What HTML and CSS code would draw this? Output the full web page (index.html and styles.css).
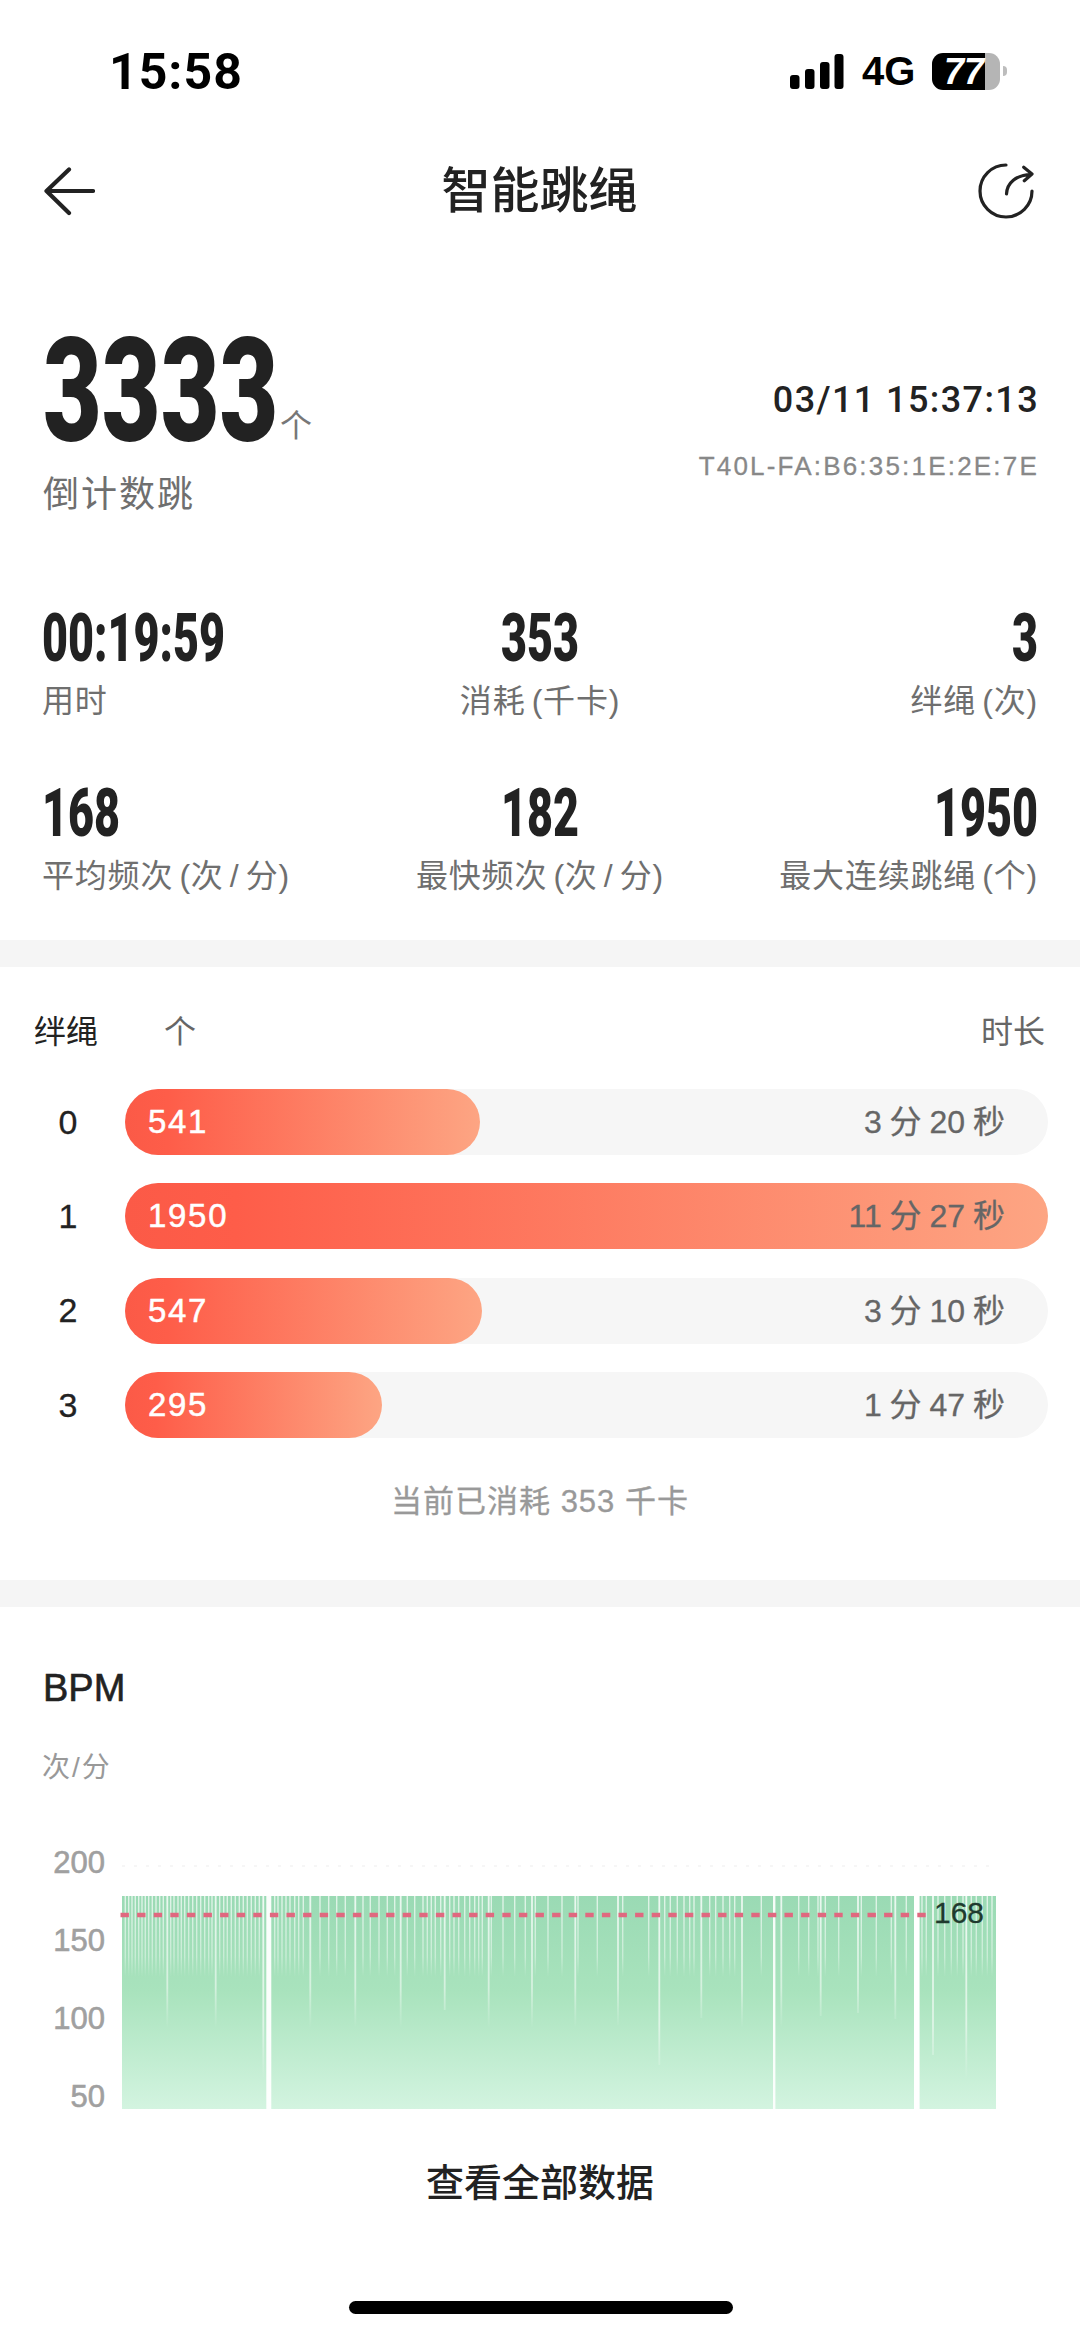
FILE: index.html
```html
<!DOCTYPE html>
<html>

<head>
    <meta charset="UTF-8">
    <title>智能跳绳</title>
    <link rel="stylesheet" href="styles.css">
</head>

<body>
    <div class="page">
        <!-- Status bar -->
        <div class="status-bar">
            <span class="status-time">15:58</span>
            <div class="status-right">
                <svg class="signal" width="54" height="36" viewBox="0 0 54 36">
                    <rect x="0" y="21" width="9.5" height="14" rx="3"></rect>
                    <rect x="15" y="15" width="9.5" height="20" rx="3"></rect>
                    <rect x="30" y="8" width="9.5" height="27" rx="3"></rect>
                    <rect x="44.5" y="0" width="9" height="35" rx="3"></rect>
                </svg>
                <span class="status-net">4G</span>
                <div class="battery">
                    <div class="battery-body">77</div>
                    <div class="battery-nub"></div>
                </div>
            </div>
        </div>

        <!-- Nav -->
        <div class="nav">
            <svg class="icon" width="52" height="52" viewBox="0 0 52 52">
                <path d="M50 26H4M26 4.500L3.500 26L26 48" fill="none" stroke="#222" stroke-width="4.200" stroke-linecap="round" stroke-linejoin="round"></path>
            </svg>
            <h1>智能跳绳</h1>
            <svg class="icon icon-right" width="60" height="60" viewBox="0 0 60 60">
                <path d="M30 4A26 26 0 1 0 56 30" fill="none" stroke="#222" stroke-width="3.200" stroke-linecap="round"></path>
                <path d="M30.500 33C31 22 40 14 55 13.500M47.700 6.300L56 13L48.300 19.700" fill="none" stroke="#222" stroke-width="3.200" stroke-linecap="round" stroke-linejoin="round"></path>
            </svg>
        </div>

        <!-- Summary -->
        <div class="summary">
            <div class="summary-left">
                <div class="count-row">
                    <span class="count-box"><span class="count">3333</span></span>
                    <span class="count-unit">个</span>
                </div>
                <div class="count-label">倒计数跳</div>
            </div>
            <div class="summary-right">
                <div class="date">03/11 15:37:13</div>
                <div class="mac">T40L-FA:B6:35:1E:2E:7E</div>
            </div>
        </div>

        <!-- Stats -->
        <div class="stats">
            <div class="stat stat-left">
                <div class="stat-value">00:19:59</div>
                <div class="stat-label">用时</div>
            </div>
            <div class="stat stat-center">
                <div class="stat-value">353</div>
                <div class="stat-label">消耗 (千卡)</div>
            </div>
            <div class="stat stat-right">
                <div class="stat-value">3</div>
                <div class="stat-label">绊绳 (次)</div>
            </div>
            <div class="stat stat-left">
                <div class="stat-value">168</div>
                <div class="stat-label">平均频次 (次 / 分)</div>
            </div>
            <div class="stat stat-center">
                <div class="stat-value">182</div>
                <div class="stat-label">最快频次 (次 / 分)</div>
            </div>
            <div class="stat stat-right">
                <div class="stat-value">1950</div>
                <div class="stat-label">最大连续跳绳 (个)</div>
            </div>
        </div>

        <div class="divider"></div>

        <!-- Bars -->
        <div class="trips">
            <div class="trips-head">
                <span class="trips-title">绊绳</span>
                <span class="trips-unit">个</span>
                <span class="trips-time">时长</span>
            </div>
            <div class="bar-list">
                <div class="bar-row">
                    <span class="bar-index">0</span>
                    <div class="track">
                        <div class="fill" style="width: 38.5%">541</div>
                        <div class="duration">3 分 20 秒</div>
                    </div>
                </div>
                <div class="bar-row">
                    <span class="bar-index">1</span>
                    <div class="track">
                        <div class="fill" style="width: 100%">1950</div>
                        <div class="duration">11 分 27 秒</div>
                    </div>
                </div>
                <div class="bar-row">
                    <span class="bar-index">2</span>
                    <div class="track">
                        <div class="fill" style="width: 38.7%">547</div>
                        <div class="duration">3 分 10 秒</div>
                    </div>
                </div>
                <div class="bar-row">
                    <span class="bar-index">3</span>
                    <div class="track">
                        <div class="fill" style="width: 27.8%">295</div>
                        <div class="duration">1 分 47 秒</div>
                    </div>
                </div>
            </div>
            <div class="trips-note">当前已消耗 353 千卡</div>
        </div>

        <div class="divider"></div>

        <!-- BPM chart -->
        <div class="bpm">
            <div class="bpm-title">BPM</div>
            <div class="bpm-unit">次/分</div>
            <div class="chart">
                <div class="axis">
                    <span>200</span>
                    <span>150</span>
                    <span>100</span>
                    <span>50</span>
                </div>
                <svg class="plot" width="880" height="250" viewBox="118 1864 880 250">
                    <defs>
                        <linearGradient id="area" x1="0" y1="1896" x2="0" y2="2109" gradientUnits="userSpaceOnUse">
                            <stop offset="0" stop-color="#9adab4"></stop>
                            <stop offset="0.45" stop-color="#a9e3bd"></stop>
                            <stop offset="1" stop-color="#d3f4e0"></stop>
                        </linearGradient>
                        <linearGradient id="fade-short" x1="0" y1="1896" x2="0" y2="1977" gradientUnits="userSpaceOnUse">
                            <stop offset="0" stop-color="#fff" stop-opacity="0.7"></stop>
                            <stop offset="0.75" stop-color="#fff" stop-opacity="0.4"></stop>
                            <stop offset="1" stop-color="#fff" stop-opacity="0"></stop>
                        </linearGradient>
                        <linearGradient id="fade-long" x1="0" y1="1896" x2="0" y2="2028" gradientUnits="userSpaceOnUse">
                            <stop offset="0" stop-color="#fff" stop-opacity="0.8"></stop>
                            <stop offset="0.7" stop-color="#fff" stop-opacity="0.5"></stop>
                            <stop offset="1" stop-color="#fff" stop-opacity="0"></stop>
                        </linearGradient>
                        <linearGradient id="fade-longer" x1="0" y1="1896" x2="0" y2="2080" gradientUnits="userSpaceOnUse">
                            <stop offset="0" stop-color="#fff" stop-opacity="0.85"></stop>
                            <stop offset="0.7" stop-color="#fff" stop-opacity="0.55"></stop>
                            <stop offset="1" stop-color="#fff" stop-opacity="0"></stop>
                        </linearGradient>
                    </defs>
                    <path d="M122 1866H996" stroke="#f3f3f3" stroke-width="1.500" stroke-dasharray="3 9"></path>
                    <rect x="122" y="1896" width="874" height="213" fill="url(#area)"></rect>
                    <path fill="none" stroke="url(#fade-short)" stroke-width="1.400" d="M125.300 1896V1977M128.700 1896V1977M132 1896V1977M135.300 1896V1977M138.700 1896V1977M142 1896V1977M145.300 1896V1977M148.700 1896V1977M152.300 1896V1977M156 1896V1977M159.700 1896V1977M163.300 1896V1977M170.700 1896V1977M174 1896V1977M178 1896V1977M181.300 1896V1977M184.700 1896V1977M188.700 1896V1977M192.700 1896V1977M196.700 1896V1977M200.700 1896V1977M204.700 1896V1977M208.700 1896V1977M212 1896V1977M219.700 1896V1977M223.700 1896V1977M227.300 1896V1977M231.300 1896V1977M235.300 1896V1977M239.300 1896V1977M243.300 1896V1977M247.300 1896V1977M251.300 1896V1977M255.300 1896V1977M259.300 1896V1977M274.700 1896V1977M278 1896V1977M282 1896V1977M286 1896V1977M290 1896V1977M294.700 1896V1977M298.700 1896V1977M303.300 1896V1977M320 1896V1977M328.700 1896V1977M336.700 1896V1977M345.300 1896V1977M363 1896V1977M370.300 1896V1977M379 1896V1977M387.300 1896V1977M394.700 1896V1977M407.300 1896V1977M414.700 1896V1977M423 1896V1977M427.300 1896V1977M431.300 1896V1977M435.300 1896V1977M440.700 1896V1977M449.700 1896V1977M454 1896V1977M458.700 1896V1977M464.700 1896V1977M469.700 1896V1977M474.700 1896V1977M478.700 1896V1977M482.300 1896V1977M491.300 1896V1977M503 1896V1977M514.700 1896V1977M525.300 1896V1977M535.300 1896V1977M548 1896V1977M562 1896V1977M578 1896V1977M597.300 1896V1977M622.700 1896V1977M648.700 1896V1977M664.700 1896V1977M670.300 1896V1977M677.300 1896V1977M684 1896V1977M689.700 1896V1977M694 1896V1977M709.700 1896V1977M715.700 1896V1977M723 1896V1977M729.700 1896V1977M734.700 1896V1977M761.300 1896V1977M798.700 1896V1977M808.700 1896V1977M818 1896V1977M825.300 1896V1977M838.700 1896V1977M861.300 1896V1977M876.300 1896V1977M891.300 1896V1977M906.300 1896V1977M922 1896V1977M926.300 1896V1977M938 1896V1977M944.700 1896V1977M951.300 1896V1977M957.300 1896V1977M963 1896V1977M971.300 1896V1977M976.300 1896V1977M982.300 1896V1977M987.300 1896V1977M992 1896V1977"></path>
                    <path fill="none" stroke="url(#fade-long)" stroke-width="1.800" d="M167.300 1896V2028M215.700 1896V2028M310.300 1896V2028M355.300 1896V2028M400.700 1896V2028M444.700 1896V2010M488.700 1896V2028M532 1896V2028M575.300 1896V2028M618 1896V2025M701.300 1896V2018M742 1896V2028M781.300 1896V2028M820.700 1896V2016M858 1896V2013M895.300 1896V2019"></path>
                    <path fill="none" stroke="url(#fade-longer)" stroke-width="1.800" d="M263.300 1896V2080M659.300 1896V2065M933 1896V2055M966.300 1896V2080"></path>
                    <path fill="none" stroke="#fff" stroke-opacity="0.95" d="M268.800 1896V2109" stroke-width="5"></path>
                    <path fill="none" stroke="#fff" stroke-opacity="0.9" d="M774.200 1896V2109" stroke-width="2.400"></path>
                    <path fill="none" stroke="#fff" d="M916.800 1896V2109" stroke-width="5.600"></path>
                    <path d="M120.500 1915H928" stroke="#e0687f" stroke-width="4.500" stroke-dasharray="8.400 8.200"></path>
                    <text class="avg-label" x="934" y="1923">168</text>
                </svg>
            </div>
            <div class="more">查看全部数据</div>
        </div>

        <div class="home-bar"></div>
    </div>
</body>

</html>
```

FILE: styles.css
```css
* {
    box-sizing: border-box;
}

body {
    font-family: "Liberation Sans", "Noto Sans CJK SC", sans-serif;
    background-color: #fff;
    color: #222;
    margin: 0;
    padding: 0;
}

.page {
    width: 1080px;
    height: 2337px;
    overflow: hidden;
    position: relative;
}

/* status bar */
.status-bar {
    height: 142px;
    display: flex;
    align-items: center;
    justify-content: space-between;
    padding: 2px 73px 0 109px;
    color: #000;
}

.status-time {
    font-family: Roboto, sans-serif;
    font-size: 50px;
    font-weight: 700;
    letter-spacing: 1px;
}

.status-right {
    display: flex;
    align-items: center;
    margin-top: -2px;
}

.signal {
    fill: #000;
    margin-right: 18px;
    margin-top: 2px;
}

.status-net {
    font-size: 40px;
    font-weight: 700;
    width: 70px;
}

.battery {
    display: flex;
    align-items: center;
}

.battery-body {
    width: 68px;
    height: 37px;
    border-radius: 11px;
    background: linear-gradient(90deg, #000 53px, #b5b5b5 53px);
    font-size: 36px;
    font-style: italic;
    line-height: 37px;
    font-weight: 700;
    color: #fff;
    padding-left: 12px;
    white-space: nowrap;
}

.battery-nub {
    width: 4px;
    height: 10px;
    margin-left: 3px;
    background-color: #bdbdbd;
    border-radius: 0 5px 5px 0;
}

/* nav */
.nav {
    height: 98px;
    display: grid;
    grid-template-columns: 1fr auto 1fr;
    align-items: center;
    padding: 0 44px 0 43px;
}

.icon {
    display: block;
}

.icon-right {
    justify-self: end;
}

h1 {
    font-size: 49px;
    font-weight: 500;
    margin: 0;
    line-height: 60px;
}

/* summary */
.summary {
    height: 300px;
    display: flex;
    justify-content: space-between;
    padding: 92px 41px 0 43px;
}

.count-row {
    display: flex;
    align-items: flex-end;
    height: 120px;
}

.count-box {
    display: block;
    width: 237px;
}

.count {
    display: inline-block;
    font-family: Roboto, sans-serif;
    font-size: 144px;
    font-weight: 900;
    line-height: 120px;
    transform: scaleX(0.705);
    transform-origin: left center;
}

.count-unit {
    font-size: 32px;
    line-height: 36px;
    color: #777;
    margin-bottom: 8px;
}

.count-label {
    font-size: 36px;
    line-height: 44px;
    letter-spacing: 2px;
    color: #6f6f6f;
    margin-top: 21px;
}

.summary-right {
    text-align: right;
    padding-top: 46px;
}

.date {
    font-family: Roboto, sans-serif;
    font-size: 36px;
    font-weight: 500;
    line-height: 44px;
    letter-spacing: 1.400px;
    color: #222;
}

.mac {
    font-size: 26px;
    line-height: 30px;
    color: #888;
    letter-spacing: 2.200px;
    margin-top: 29px;
    -webkit-text-stroke: 0.300px #888;
}

/* stats */
.stats {
    height: 400px;
    display: grid;
    grid-template-columns: repeat(3, 1fr);
    grid-template-rows: 175px 175px;
    padding: 69px 42px 0 42px;
}

.stat-left {
    text-align: left;
}

.stat-center {
    text-align: center;
}

.stat-right {
    text-align: right;
}

.stat-value {
    font-family: Roboto, sans-serif;
    font-size: 66px;
    font-weight: 900;
    line-height: 60px;
    transform: scaleX(0.68);
}

.stat-left .stat-value {
    transform-origin: left center;
}

.stat-right .stat-value {
    transform-origin: right center;
}

.stat-label {
    font-size: 32px;
    line-height: 40px;
    letter-spacing: 0.800px;
    word-spacing: -3.500px;
    color: #6f6f6f;
    margin-top: 12px;
    white-space: nowrap;
}

.divider {
    height: 27px;
    background-color: #f5f5f5;
}

/* trip bars */
.trips {
    height: 613px;
    padding-top: 42px;
}

.trips-head {
    display: flex;
    align-items: center;
    height: 40px;
    font-size: 32px;
    padding: 0 35px 0 34px;
    color: #666;
}

.trips-title {
    color: #222;
    width: 130px;
}

.trips-unit {
    flex: 1;
}

.bar-list {
    display: grid;
    row-gap: 28.400px;
    margin-top: 40px;
}

.bar-row {
    display: flex;
    align-items: center;
    padding-right: 32px;
}

.bar-index {
    width: 125px;
    padding-left: 11px;
    text-align: center;
    font-size: 34px;
    -webkit-text-stroke: 0.300px #222;
}

.track {
    flex: 1;
    height: 66px;
    display: grid;
    background-color: #f6f6f6;
    border-radius: 33px;
}

.fill {
    grid-area: 1 / 1;
    height: 66px;
    border-radius: 33px;
    background: linear-gradient(90deg, #fb5a47 0%, #fe5d49 12%, #fda583 100%);
    color: #fff;
    font-size: 33px;
    line-height: 66px;
    letter-spacing: 1.700px;
    padding-left: 23px;
    -webkit-text-stroke: 0.500px #fff;
}

.duration {
    grid-area: 1 / 1;
    justify-self: end;
    font-size: 32px;
    line-height: 66px;
    word-spacing: -1px;
    color: #666;
    padding-right: 43px;
    -webkit-text-stroke: 0.300px #666;
}

.trips-note {
    font-size: 31px;
    line-height: 40px;
    color: #999;
    text-align: center;
    letter-spacing: 1px;
    margin-top: 44px;
    -webkit-text-stroke: 0.300px #999;
}

/* bpm chart */
.bpm {
    padding-top: 59px;
}

.bpm-title {
    font-size: 38px;
    line-height: 44px;
    padding-left: 43px;
    color: #222;
    -webkit-text-stroke: 0.600px #222;
}

.bpm-unit {
    font-size: 28px;
    line-height: 36px;
    letter-spacing: 2px;
    color: #999;
    padding-left: 42px;
    margin-top: 40px;
}

.chart {
    display: flex;
    margin-top: 38px;
}

.axis {
    width: 118px;
    padding-right: 13px;
    display: flex;
    flex-direction: column;
    text-align: right;
    font-size: 31px;
    line-height: 78px;
    color: #a0a0a0;
    -webkit-text-stroke: 0.600px #a0a0a0;
}

.plot {
    display: block;
    margin-top: 40px;
}

.avg-label {
    font-family: "Liberation Sans", sans-serif;
    font-size: 30px;
    fill: #1f3a2e;
    stroke: #1f3a2e;
    stroke-width: 0.300px;
}

.more {
    font-size: 38px;
    line-height: 50px;
    font-weight: 500;
    text-align: center;
    color: #222;
    margin-top: 22px;
}

.home-bar {
    position: absolute;
    left: 349px;
    top: 2301px;
    width: 384px;
    height: 13px;
    border-radius: 7px;
    background-color: #000;
}
```
